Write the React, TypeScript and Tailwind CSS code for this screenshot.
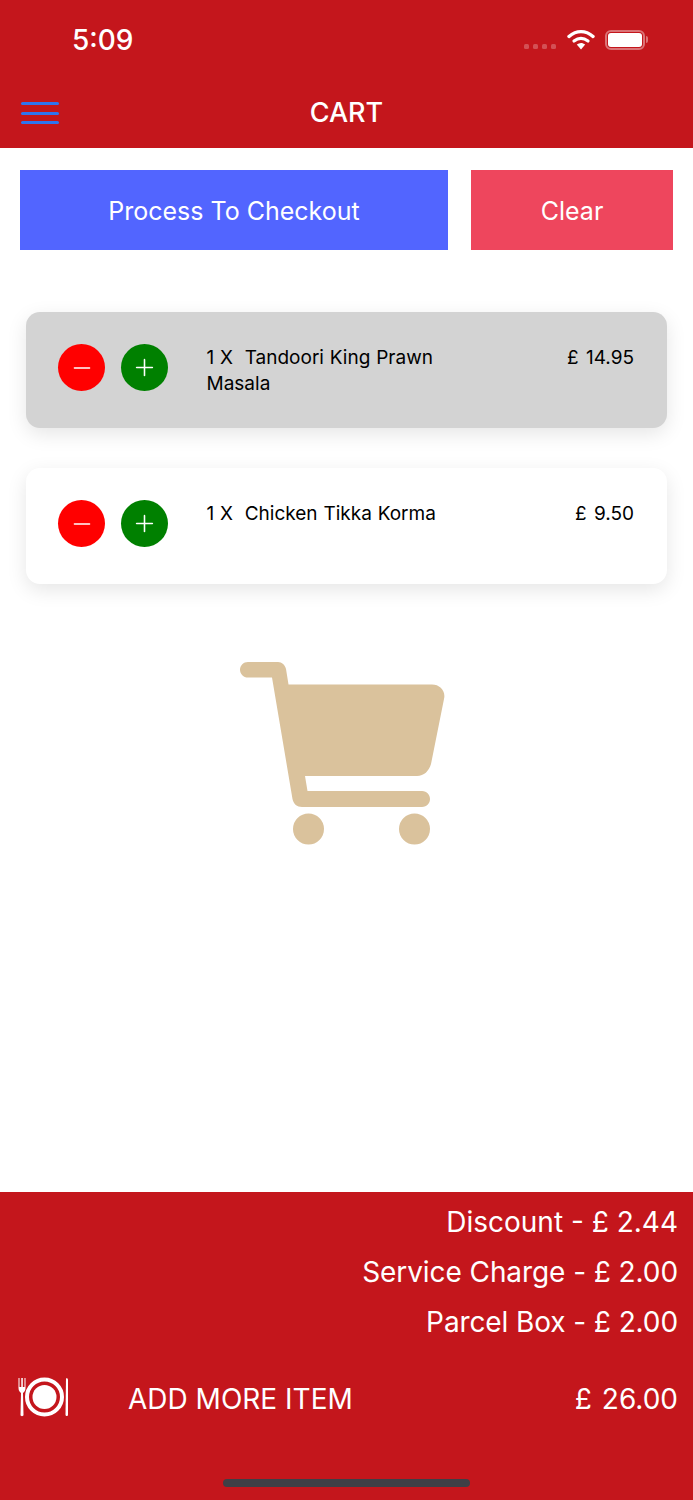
import { Minus, Plus } from "lucide-react";

type CartLine = { qty: number; name: string; price: string; active?: boolean };

const lines: CartLine[] = [
  { qty: 1, name: "Tandoori King Prawn Masala", price: "£ 14.95", active: true },
  { qty: 1, name: "Chicken Tikka Korma", price: "£ 9.50" },
];

function StatusBar() {
  return (
    <div className="flex h-[80px] items-start justify-between pr-[45px] pl-[72px]">
      <span className="mt-[23px] text-[28px] leading-[34px] font-medium text-white">5:09</span>
      <div className="mt-[29px] flex items-center">
        <div className="mt-[14px] flex gap-[3.5px]">
          <span className="h-[5px] w-[5.5px] rounded-[1.5px] bg-white/25" />
          <span className="h-[5px] w-[5.5px] rounded-[1.5px] bg-white/25" />
          <span className="h-[5px] w-[5.5px] rounded-[1.5px] bg-white/25" />
          <span className="h-[5px] w-[5.5px] rounded-[1.5px] bg-white/25" />
        </div>
        <svg className="ml-[11px]" width="28" height="21" viewBox="0 0 28 21" fill="none">
          <path d="M2 7.5C9.5 1 18.5 1 26 7.5" stroke="white" strokeWidth="3.4" strokeLinecap="round" />
          <path d="M7 12C11.5 8.5 16.5 8.5 21 12" stroke="white" strokeWidth="3.2" strokeLinecap="round" />
          <path d="M9.8 15.5L14 20.5L18.2 15.5C15.5 13.4 12.5 13.4 9.8 15.5Z" fill="white" />
        </svg>
        <div className="ml-[10px] flex h-[20px] w-[40px] items-center justify-center rounded-[6px] border-2 border-white/40">
          <div className="h-[14px] w-[34px] rounded-[3px] bg-white" />
        </div>
        <span className="ml-[1px] h-[7px] w-[2px] rounded-r-[2px] bg-white/40" />
      </div>
    </div>
  );
}

function Header() {
  return (
    <header className="relative flex h-[148px] shrink-0 flex-col bg-[#c4161c]">
      <StatusBar />
      <div className="relative flex h-[68px] items-center justify-center pb-[2px]">
        <div className="absolute top-[22px] left-[21px] flex w-[38px] flex-col gap-[6.5px]">
          <span className="h-[3px] rounded-full bg-[#2f74f0]" />
          <span className="h-[3px] rounded-full bg-[#2f74f0]" />
          <span className="h-[3px] rounded-full bg-[#2f74f0]" />
        </div>
        <h1 className="text-[27px] leading-[32px] font-medium text-white">CART</h1>
      </div>
    </header>
  );
}

function Row({ line }: { line: CartLine }) {
  return (
    <div
      className={`flex h-[116px] rounded-[14px] pt-[32px] pr-[33px] pl-[32px] shadow-[0_6px_20px_rgba(0,0,0,0.1)] ${
        line.active ? "bg-[#d3d3d3]" : "bg-white"
      }`}
    >
      <div className="flex shrink-0 gap-[16px]">
        <button type="button" className="flex h-[47px] w-[47px] items-center justify-center rounded-full bg-[#ff0000] text-white">
          <Minus size={26} strokeWidth={1.4} />
        </button>
        <button type="button" className="flex h-[47px] w-[47px] items-center justify-center rounded-full bg-[#008000] text-white">
          <Plus size={27} strokeWidth={1.4} />
        </button>
      </div>
      <p className="mt-[1px] ml-[38.5px] w-[280px] text-[19px] leading-[26px] whitespace-pre-wrap text-black [word-spacing:0.5px]">
        {`${line.qty} X  ${line.name}`}
      </p>
      <span className="mt-[1px] ml-auto text-[19px] leading-[26px] text-black [word-spacing:2px]">{line.price}</span>
    </div>
  );
}

function CartIcon() {
  return (
    <svg width="205" height="184" viewBox="0 0 205 184" fill="#dac29c">
      <path d="M8 0H38C42 0 45 3 46 7L48.5 22.5H192C200 22.5 206 29 204 37L191 102C189 109 184 114 177 114H65L67.5 129H182C187 129 190 133 190 137C190 141 187 145 182 145H62C57 145 53.5 142 52.5 137L32 15.5H8C3.5 15.5 0 12 0 7.7C0 3.5 3.5 0 8 0Z" />
      <circle cx="68.5" cy="167" r="15.5" />
      <circle cx="174.5" cy="167" r="15.5" />
    </svg>
  );
}

function PlateIcon() {
  return (
    <svg className="mb-[4px]" width="52" height="40" viewBox="0 0 52 40" fill="white">
      <path d="M0.5 1V11C0.5 14 2 15 3 16L2.5 38C2.5 39.5 5.5 39.5 5.5 38L5 16C6 15 7.5 14 7.5 11V1H6.5V10H4.8V1H3.3V10H1.5V1Z" />
      <circle cx="26.5" cy="20" r="17.5" fill="none" stroke="white" strokeWidth="4" />
      <circle cx="26.5" cy="20" r="12" />
      <path d="M48 1.5C49 1 50 1.5 50 3V37.5C50 39.5 47.5 39.5 47.5 37.5Z" />
    </svg>
  );
}

function Footer() {
  return (
    <footer className="relative flex h-[308px] shrink-0 flex-col bg-[#c4161c] text-[28px] leading-[50px] text-white">
      <div className="flex flex-col items-end pt-[5px] pr-[15px]">
        <span>Discount - £ 2.44</span>
        <span className="tracking-[-0.08px]">Service Charge - £ 2.00</span>
        <span className="tracking-[-0.1px]">Parcel Box - £ 2.00</span>
      </div>
      <div className="mt-[27px] flex items-center pr-[15px] pl-[18px]">
        <PlateIcon />
        <span className="ml-[58px]">ADD MORE ITEM</span>
        <span className="ml-auto [word-spacing:2px]">£ 26.00</span>
      </div>
      <div className="mt-auto mb-[13px] h-[8px] w-[247px] self-center rounded-full bg-[#3f3f46]" />
    </footer>
  );
}

export default function App() {
  return (
    <div className="flex h-[1500px] w-[693px] flex-col overflow-hidden bg-white font-['Inter',sans-serif]">
      <Header />
      <main className="flex min-h-0 flex-1 flex-col">
        <div className="flex gap-[23px] pt-[22px] pl-[20px] text-[25px] text-white">
          <button type="button" className="h-[80px] w-[428px] bg-[#5265ff] pt-[3px]">
            Process To Checkout
          </button>
          <button type="button" className="h-[80px] w-[202px] bg-[#ee465d] pt-[3px]">
            Clear
          </button>
        </div>
        <div className="mt-[62px] flex flex-col gap-[40px] px-[26px]">
          {lines.map((line) => (
            <Row key={line.name} line={line} />
          ))}
        </div>
        <div className="mt-[78px] flex justify-center pr-[8px]">
          <CartIcon />
        </div>
      </main>
      <Footer />
    </div>
  );
}
